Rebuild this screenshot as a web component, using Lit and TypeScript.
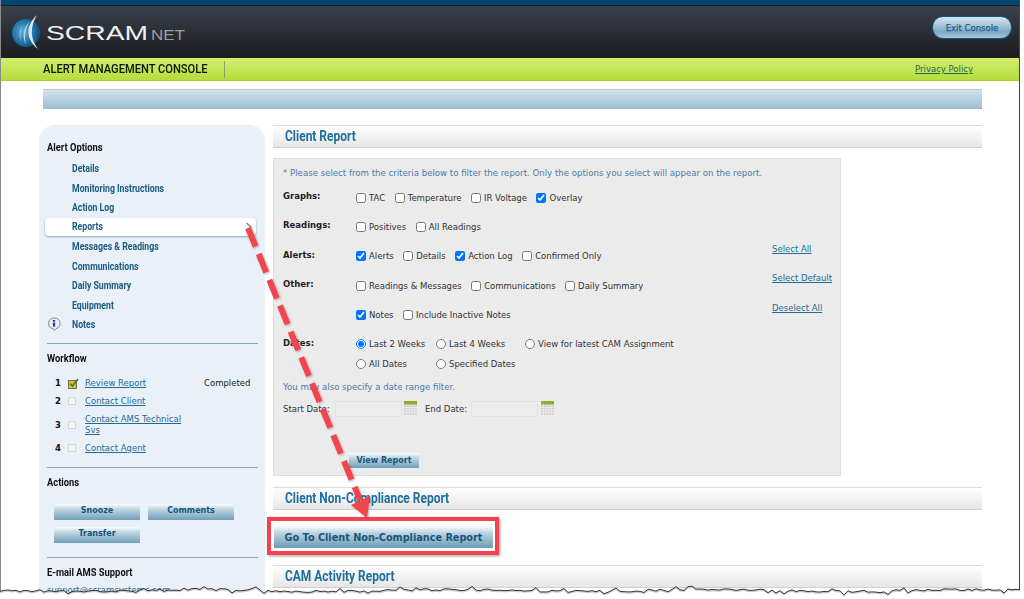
import { LitElement, html, css, svg } from "lit";
import { customElement } from "lit/decorators.js";

const navItems = ["Details", "Monitoring Instructions", "Action Log", "Reports", "Messages & Readings", "Communications", "Daily Summary", "Equipment", "Notes"];

type Opt = [string, boolean?];
const rows: { label: string; opts: Opt[] }[] = [
  { label: "Graphs:", opts: [["TAC"], ["Temperature"], ["IR Voltage"], ["Overlay", true]] },
  { label: "Readings:", opts: [["Positives"], ["All Readings"]] },
  { label: "Alerts:", opts: [["Alerts", true], ["Details"], ["Action Log", true], ["Confirmed Only"]] },
  { label: "Other:", opts: [["Readings & Messages"], ["Communications"], ["Daily Summary"]] },
  { label: "", opts: [["Notes", true], ["Include Inactive Notes"]] },
];

function tornPoints(): string {
  let seed = 17;
  const rnd = () => { seed = (seed * 9301 + 49297) % 233280; return seed / 233280; };
  const pts: string[] = [];
  for (let x = 0; x <= 1020; x += 4) {
    const r = rnd();
    const spike = r > 0.95 ? 2.5 : r < 0.05 ? -2.5 : 0;
    const y = 6.5 + Math.sin(x / 41) * 1 + (rnd() - 0.5) * 2.2 + spike;
    pts.push(`${x},${y.toFixed(1)}`);
  }
  return pts.join(" L");
}
const torn = tornPoints();

@customElement("app-root")
export class AppRoot extends LitElement {
  static styles = css`
    :host { display: block; position: relative; width: 1024px; height: 599px; overflow: hidden; background: #fff; font-family: "DejaVu Sans", sans-serif; font-size: 8.5px; color: #333; }
    .frame { width: 1020px; height: 599px; box-sizing: border-box; border-left: 1px solid #8a8a8a; border-right: 1px solid #444; overflow: hidden; }
    .topband { height: 5px; background: #02466f; border-bottom: 1px solid #14202c; }
    .header { height: 52px; background: linear-gradient(#3b404b, #1b1c1f); display: flex; align-items: flex-start; justify-content: space-between; }
    .logo { display: block; margin-left: 9px; }
    .exit { margin: 10px 7px 0 0; width: 80px; height: 23px; box-sizing: border-box; border: 1px solid #0f5a80; border-radius: 11px; background: linear-gradient(#d8e6ef, #9fc1d6 45%, #7ea8c2 70%, #a6c6d9); color: #1c6288; font-size: 8.5px; display: flex; align-items: center; justify-content: center; -webkit-text-stroke: 0.25px #1c6288; }
    .green { height: 23px; background: linear-gradient(#d3ef6f, #b4dc3c); border-bottom: 1px solid #a8d030; box-sizing: border-box; display: flex; align-items: center; justify-content: space-between; padding: 0 46px 0 42px; }
    .console { display: flex; height: 17px; align-items: center; width: 181px; border-right: 1px solid #8d9f70; }
    .console span { font-family: Roboto, sans-serif; font-weight: 500; font-size: 12px; color: #0d1405; white-space: nowrap; transform: scaleX(.927); transform-origin: left center; }
    .privacy { color: #1d6a55; text-decoration: underline; font-size: 8.5px; }
    .bar { margin: 8px 0 16px 42px; width: 939px; height: 20px; box-sizing: border-box; border-top: 1px solid #b4cfdf; background: linear-gradient(#d5e2ec, #9cbdd2); }
    .content { display: flex; align-items: flex-start; gap: 8px; margin-left: 38px; }
    .side { width: 226px; height: 480px; flex: none; box-sizing: border-box; background: #e9f0f8; border-radius: 16px 16px 0 0; padding: 16px 7px 0 8px; }
    .h { font-family: Roboto, sans-serif; font-weight: 700; font-size: 11px; line-height: 13px; color: #111; transform: scaleX(.85); transform-origin: left center; white-space: nowrap; }
    .nav { margin-top: 5px; display: flex; flex-direction: column; }
    .item { height: 19.5px; line-height: 19.5px; padding-left: 27px; margin: 0 2px 0 -2px; position: relative; font-family: Roboto, sans-serif; font-weight: 700; font-size: 10.5px; color: #1a5b80; }
    .item span { display: inline-block; transform: scaleX(.83); transform-origin: left center; white-space: nowrap; }
    .item.on { background: #fff; border-radius: 4px; height: 18px; line-height: 18px; margin-top: 0.75px; margin-bottom: 0.75px; box-shadow: 0 1px 2px #7fa4bc; }
    .chev { position: absolute; right: 3px; top: 4px; display: block; }
    .info { position: absolute; left: 2px; top: 2px; display: block; }
    .hr { border: 0; border-top: 1px solid #7fa9c4; margin: 8px 0 8px; }
    .wf { margin: 13px 0 13px; display: grid; grid-template-columns: 13px 17px 119px auto; row-gap: 7px; align-items: center; padding-left: 8px; }
    .wf b { color: #111; }
    .box { width: 8px; height: 8px; border: 1px solid #d6d6d6; background: #f6f6f6; display: block; box-sizing: border-box; }
    .link { color: #1f6c94; text-decoration: underline; white-space: nowrap; }
    .wf .link { line-height: 11px; white-space: normal; max-width: 105px; }
    .done { color: #222; }
    .acts { margin: 15px 0 0 7px; display: grid; grid-template-columns: 86px 86px; gap: 7px 8px; }
    .btn { height: 16px; background: linear-gradient(#fbfdfe, #c5d8e3 30%, #6f9fba); color: #15577c; font-size: 8px; font-weight: 700; display: flex; align-items: center; justify-content: center; }
    .acts .btn { padding-bottom: 2px; box-sizing: border-box; }
    .rule2 { margin-top: 14px; }
    .mail { margin-top: 6px; line-height: 11px; }
    .main { width: 709px; flex: none; }
    .sec { height: 23px; box-sizing: border-box; border-top: 1px solid #dcdcdc; border-bottom: 1px solid #cfcfcf; background: linear-gradient(#fff, #e6e6e6); padding-left: 12px; font-family: Roboto, sans-serif; font-weight: 700; font-size: 14px; line-height: 20px; color: #1d6f9e; }
    .sec span { display: inline-block; transform: scaleX(.855); transform-origin: left center; white-space: nowrap; }
    .panel { margin-top: 10px; width: 568px; height: 318px; box-sizing: border-box; background: #ebebeb; border: 1px solid #dedede; padding: 9px 9px 0 9px; position: relative; }
    .note { color: #4d7ba6; line-height: 11px; font-size: 8.6px; white-space: nowrap; }
    .rows { margin-top: 10px; }
    .row { display: flex; height: 29.4px; }
    .lbl { width: 73px; font-weight: 700; color: #222; flex: none; padding-top: 2px; box-sizing: border-box; }
    .opts { display: flex; padding-top: 2.5px; }
    .opt { display: flex; align-items: center; gap: 3px; margin-right: 9.5px; height: 12px; white-space: nowrap; }
    input { margin: 0; flex: none; }
    input[type="checkbox"], input[type="radio"] { width: 10px; height: 10px; }
    .dates { display: grid; grid-template-columns: 80px 89px auto; row-gap: 8px; padding-top: 2px; }
    .dates .opt { margin: 0; }
    .filter-note { margin-top: 17px; }
    .range { display: flex; align-items: flex-start; margin-top: 8px; line-height: 16px; }
    .range span { width: 52px; }
    .range .e { width: 46px; margin-left: 8px; }
    .fake { width: 67px; height: 16px; box-sizing: border-box; background: #ececec; border: 1px solid #dfe3e6; display: block; }
    .cal { display: block; margin-left: 2px; }
    .cal.b { margin-left: 3px; }
    .view { width: 70px; margin: 36px 0 0 66px; height: 15px; }
    .side-links { position: absolute; left: 498px; top: 0; display: flex; flex-direction: column; gap: 19px; padding-top: 85px; line-height: 10.4px; }
    .go { margin: 16px 0 17px 1px; width: 219px; height: 22px; font-size: 9.7px; background: linear-gradient(#fbfdfe, #c0d5e1 30%, #6a9bb7); }
    .gap { margin-top: 11px; }
    .red { position: absolute; left: 267px; top: 517px; width: 232px; height: 38px; box-sizing: border-box; border: 4px solid #f2444e; box-shadow: 1px 1px 3px #999; }
    .ov { position: absolute; left: 0; top: 0; display: block; pointer-events: none; }
    .torn { position: absolute; left: 0; top: 584px; display: block; }
    .wordmark { font-family: "Liberation Sans", sans-serif; }
  `;

  private opt(o: Opt) {
    return html`<label class="opt"><input type="checkbox" ?checked=${!!o[1]} />${o[0]}</label>`;
  }

  private cal(second = false) {
    return html`<svg class="cal ${second ? "b" : ""}" width="13" height="14" viewBox="0 0 13 14"><rect width="13" height="14" fill="#d2d2d2"/><rect width="13" height="3.5" fill="#8fb02a"/><path d="M0 6.5H13M0 9H13M0 11.5H13M2.6 3.5V14M5.2 3.5V14M7.8 3.5V14M10.4 3.5V14" stroke="#f2f2f2" stroke-width=".7"/></svg>`;
  }

  render() {
    return html`
      <div class="frame">
        <div class="topband"></div>
        <header class="header">
          <svg class="logo" width="190" height="52" viewBox="0 0 190 52">
            <defs>
              <radialGradient id="g" cx=".4" cy=".45" r=".7"><stop offset="0" stop-color="#5fb0dc"/><stop offset=".6" stop-color="#1a6da3"/><stop offset="1" stop-color="#0c3f63"/></radialGradient>
            </defs>
            <circle cx="16" cy="27" r="14" fill="url(#g)"/>
            <path d="M27 9C17 18 14 32 28 43C20 33 20 20 27 9Z" fill="#dfe6ea"/>
            <path d="M20 15C13 22 12 31 16 39C14 31 15 23 20 15ZM13 19C9 24 9 30 11 35C10 30 10 24 13 19Z" fill="#b9d4e4"/>
            <text x="36" y="34" class="wordmark" font-size="20" fill="#eceeef" textLength="102" lengthAdjust="spacingAndGlyphs">SCRAM</text>
            <text x="141" y="34" class="wordmark" font-size="14" fill="#9a9fa5" textLength="34" lengthAdjust="spacingAndGlyphs">NET</text>
          </svg>
          <div class="exit">Exit Console</div>
        </header>
        <div class="green">
          <div class="console"><span>ALERT MANAGEMENT CONSOLE</span></div>
          <a class="privacy">Privacy Policy</a>
        </div>
        <div class="bar"></div>
        <div class="content">
          <aside class="side">
            <div class="h">Alert Options</div>
            <nav class="nav">
              ${navItems.map((n) => html`<div class="item ${n === "Reports" ? "on" : ""}">
                ${n === "Notes" ? html`<svg class="info" width="14" height="14" viewBox="0 0 14 14"><path d="M7 1a6 5.5 0 0 1 2 10.7L7.5 13.5 6.5 11.9A6 5.5 0 0 1 7 1Z" fill="#ececec" stroke="#8a8a8a" stroke-width="1"/><rect x="5.9" y="5.6" width="2.2" height="4" fill="#2238c8"/><rect x="5.9" y="3" width="2.2" height="1.8" fill="#2238c8"/></svg>` : ""}
                <span>${n}</span>
                ${n === "Reports" ? html`<svg class="chev" width="8" height="10" viewBox="0 0 8 10"><path d="M1.5 1L6 5L1.5 9" fill="none" stroke="#6c8799" stroke-width="1.4"/></svg>` : ""}
              </div>`)}
            </nav>
            <hr class="hr" />
            <div class="h">Workflow</div>
            <div class="wf">
              <b>1</b>
              <svg width="11" height="11" viewBox="0 0 11 11"><rect x="0.5" y="2.5" width="8" height="8" fill="#e9b92c" stroke="#555" stroke-width=".8"/><path d="M2 5.5L4.5 8L10 1" fill="none" stroke="#3b7a2a" stroke-width="1.5"/></svg>
              <a class="link">Review Report</a><span class="done">Completed</span>
              <b>2</b><i class="box"></i><a class="link">Contact Client</a><span></span>
              <b>3</b><i class="box"></i><a class="link">Contact AMS Technical Svs</a><span></span>
              <b>4</b><i class="box"></i><a class="link">Contact Agent</a><span></span>
            </div>
            <hr class="hr" />
            <div class="h">Actions</div>
            <div class="acts">
              <div class="btn">Snooze</div>
              <div class="btn">Comments</div>
              <div class="btn">Transfer</div>
            </div>
            <hr class="hr rule2" />
            <div class="h">E-mail AMS Support</div>
            <div class="mail"><a class="link">support@scramsystems.com</a></div>
          </aside>
          <main class="main">
            <div class="sec"><span>Client Report</span></div>
            <section class="panel">
              <div class="note">* Please select from the criteria below to filter the report. Only the options you select will appear on the report.</div>
              <div class="rows">
                ${rows.map((r) => html`<div class="row"><div class="lbl">${r.label}</div><div class="opts">${r.opts.map((o) => this.opt(o))}</div></div>`)}
                <div class="row">
                  <div class="lbl">Dates:</div>
                  <div class="dates">
                    <label class="opt"><input type="radio" name="d" checked />Last 2 Weeks</label>
                    <label class="opt"><input type="radio" name="d" />Last 4 Weeks</label>
                    <label class="opt"><input type="radio" name="d" />View for latest CAM Assignment</label>
                    <label class="opt"><input type="radio" name="d" />All Dates</label>
                    <label class="opt"><input type="radio" name="d" />Specified Dates</label>
                  </div>
                </div>
              </div>
              <div class="note filter-note">You may also specify a date range filter.</div>
              <div class="range">
                <span>Start Date:</span><i class="fake"></i>${this.cal()}
                <span class="e">End Date:</span><i class="fake"></i>${this.cal(true)}
              </div>
              <div class="btn view">View Report</div>
              <div class="side-links">
                <a class="link">Select All</a>
                <a class="link">Select Default</a>
                <a class="link">Deselect All</a>
              </div>
            </section>
            <div class="sec gap"><span>Client Non-Compliance Report</span></div>
            <div class="btn go">Go To Client Non-Compliance Report</div>
            <div class="sec"><span>CAM Activity Report</span></div>
          </main>
        </div>
      </div>
      <div class="red"></div>
      <svg class="ov" width="1024" height="599" viewBox="0 0 1024 599">
        <defs><filter id="s" x="-20%" y="-20%" width="140%" height="140%"><feDropShadow dx="1" dy="1" stdDeviation="1" flood-color="#000" flood-opacity=".3"/></filter></defs>
        <g filter="url(#s)">
          <path d="M248 228L360 500" stroke="#f2444e" stroke-width="6" stroke-dasharray="20 8" fill="none"/>
          <path d="M367 518L370 496L351 505Z" fill="#f2444e"/>
        </g>
      </svg>
      <svg class="torn" width="1024" height="15" viewBox="0 0 1024 15">
        ${svg`<path d="M0,15 L${torn} L1024,6 L1024,15Z" fill="#fff"/>
        <path d="M${torn}" transform="translate(0,1)" fill="none" stroke="#999" stroke-width="1.5" opacity=".5"/>
        <path d="M${torn}" fill="none" stroke="#333" stroke-width="1"/>`}
      </svg>
    `;
  }
}
